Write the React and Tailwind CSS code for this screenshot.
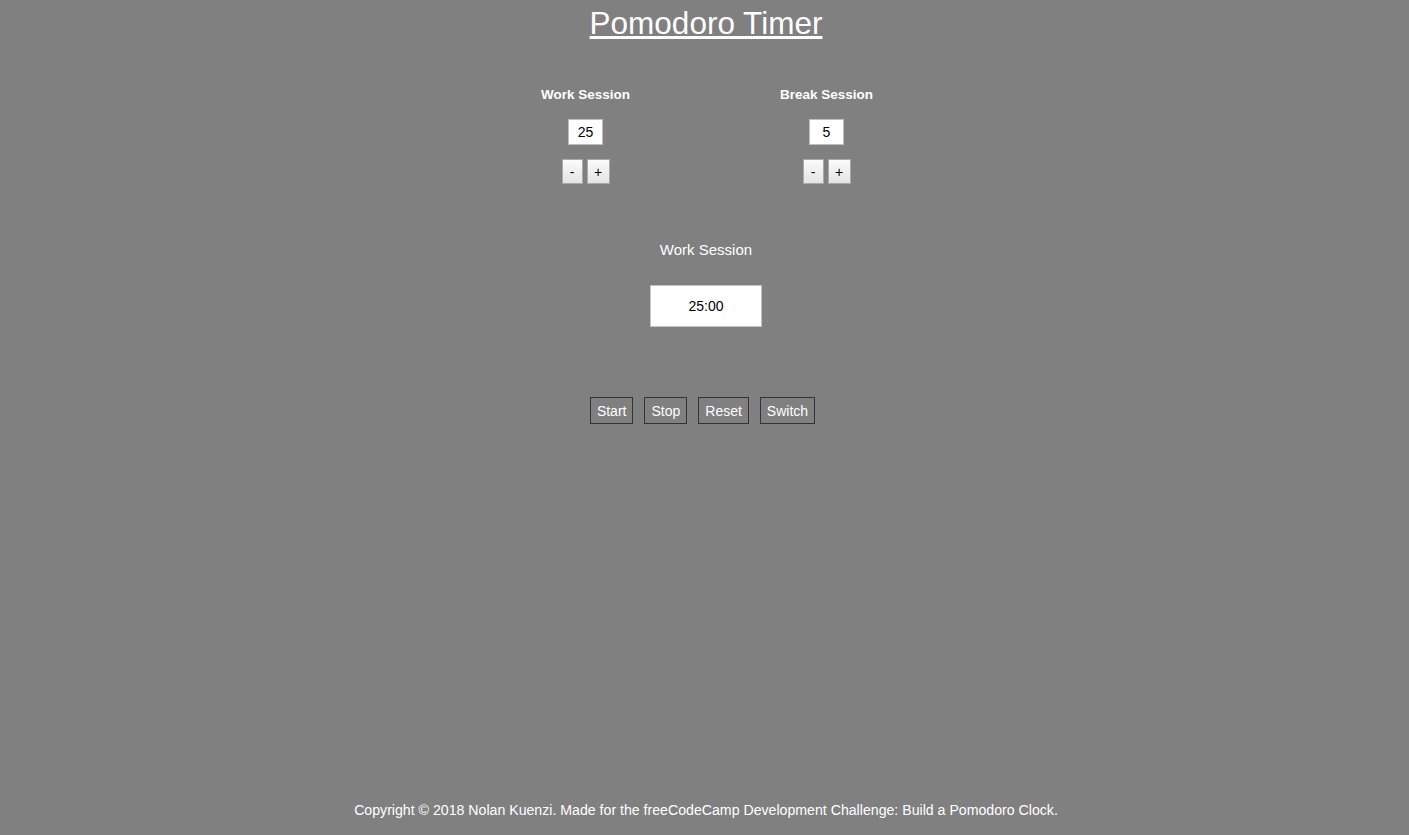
import React from 'react';

const Stepper = ({ label, value }) => (
  <div className="w-[241px] flex flex-col items-center">
    <h3 className="text-[13.5px] leading-[16px] font-bold">{label}</h3>
    <div className="mt-[16px] w-[35px] h-[26px] bg-white border border-[#bdbdbd] text-black text-[14px] flex items-center justify-center">
      {value}
    </div>
    <div className="mt-[14px] flex gap-[4px]">
      <button className="w-[21px] h-[25px] border border-[#a9a9a9] bg-gradient-to-b from-[#fbfbfb] to-[#e4e4e4] text-black text-[14px] leading-none flex items-center justify-center">
        -
      </button>
      <button className="w-[23px] h-[25px] border border-[#a9a9a9] bg-gradient-to-b from-[#fbfbfb] to-[#e4e4e4] text-black text-[14px] leading-none flex items-center justify-center">
        +
      </button>
    </div>
  </div>
);

const ControlButton = ({ children }) => (
  <button className="h-[27px] px-[6px] border border-[#333333] bg-[#808080] text-white text-[14px] leading-none">
    {children}
  </button>
);

export default function App() {
  return (
    <div className="min-h-screen bg-[#808080] pl-[3px] flex flex-col items-center text-white font-['Liberation_Sans',Arial,sans-serif]">
      {/* Title */}
      <h1 className="mt-[5px] text-[31.5px] leading-[36px] underline underline-offset-[2px]">
        Pomodoro Timer
      </h1>

      {/* Session lengths */}
      <div className="mt-[46px] flex">
        <Stepper label="Work Session" value="25" />
        <Stepper label="Break Session" value="5" />
      </div>

      {/* Current timer */}
      <p className="mt-[57px] text-[15px] leading-[17px]">Work Session</p>
      <div className="mt-[27px] w-[112px] h-[42px] bg-white border border-[#c4c4c4] text-black text-[14px] flex items-center justify-center">
        25:00
      </div>

      {/* Controls */}
      <div className="mt-[70px] pr-[7px] flex gap-[11px]">
        <ControlButton>Start</ControlButton>
        <ControlButton>Stop</ControlButton>
        <ControlButton>Reset</ControlButton>
        <ControlButton>Switch</ControlButton>
      </div>

      {/* Footer */}
      <footer className="mt-auto pb-[17px] text-[14.15px] leading-[16px]">
        Copyright © 2018 Nolan Kuenzi. Made for the freeCodeCamp Development Challenge: Build a Pomodoro Clock.
      </footer>
    </div>
  );
}
